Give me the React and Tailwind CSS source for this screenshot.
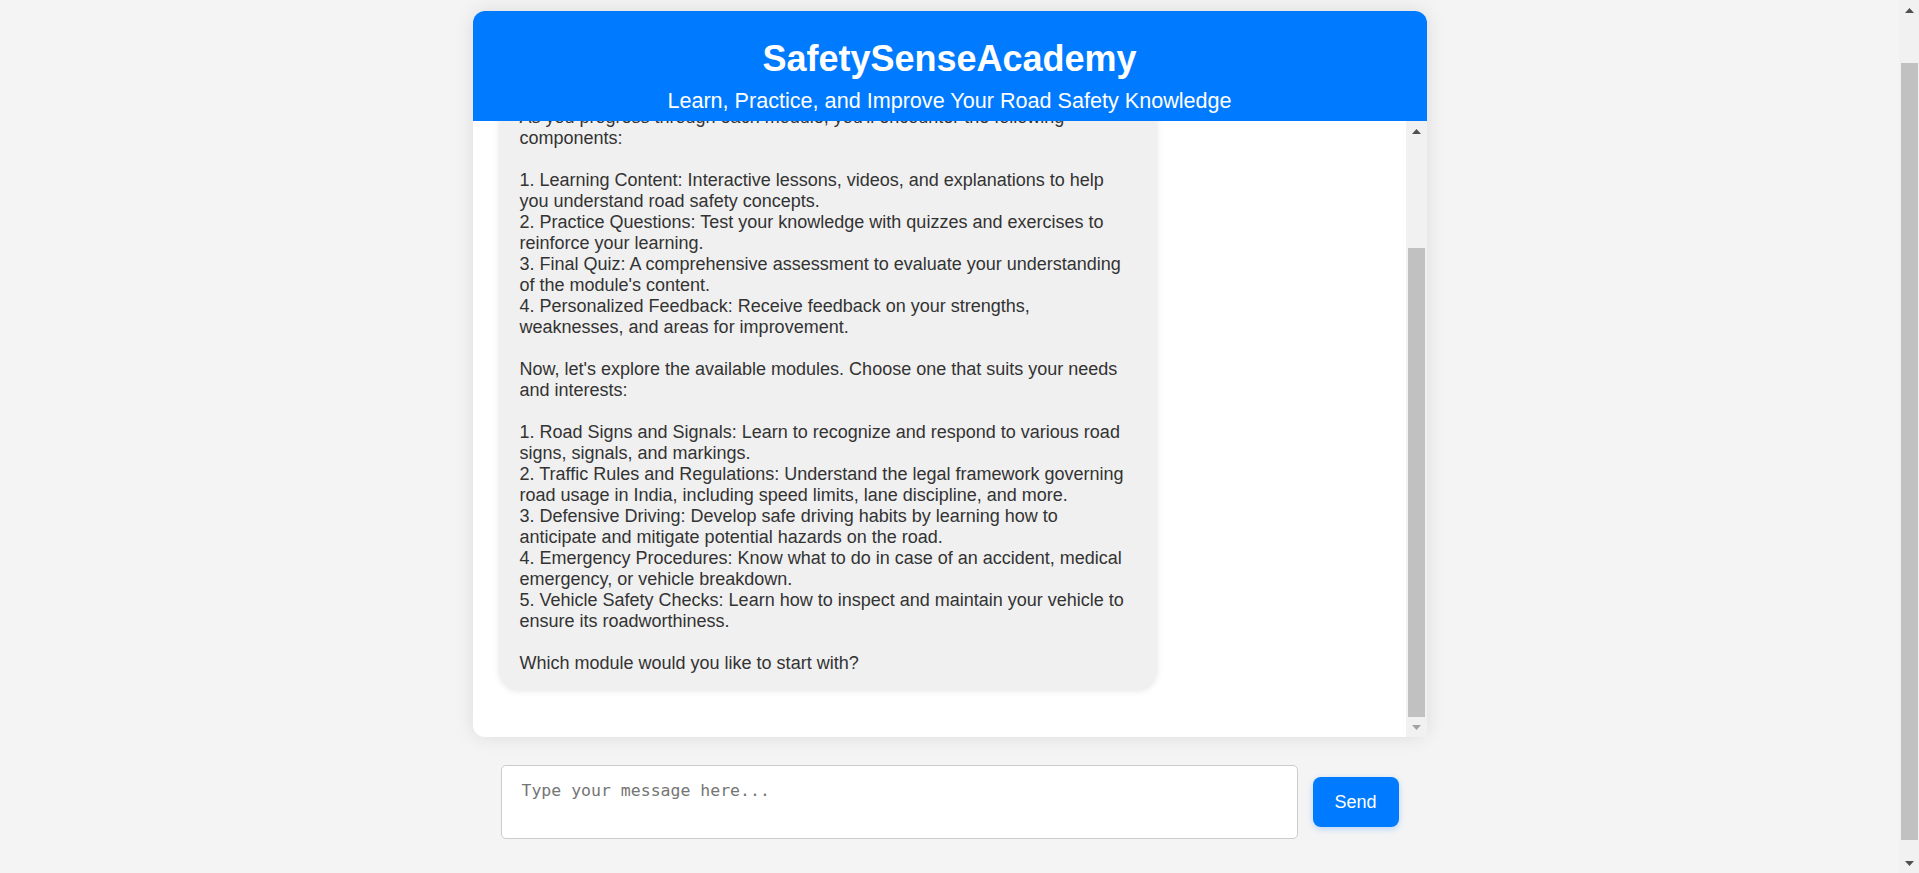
import React, { useLayoutEffect, useRef } from "react";

const intro =
  "Welcome to SafetySenseAcademy! I'm here to help you learn and improve your road safety knowledge through interactive modules tailored to Indian roads and traffic conditions. Each module is designed to build your confidence and skills as a responsible road user.\n\n";

const body = `As you progress through each module, you'll encounter the following components:

1. Learning Content: Interactive lessons, videos, and explanations to help you understand road safety concepts.
2. Practice Questions: Test your knowledge with quizzes and exercises to reinforce your learning.
3. Final Quiz: A comprehensive assessment to evaluate your understanding of the module's content.
4. Personalized Feedback: Receive feedback on your strengths, weaknesses, and areas for improvement.

Now, let's explore the available modules. Choose one that suits your needs and interests:

1. Road Signs and Signals: Learn to recognize and respond to various road signs, signals, and markings.
2. Traffic Rules and Regulations: Understand the legal framework governing road usage in India, including speed limits, lane discipline, and more.
3. Defensive Driving: Develop safe driving habits by learning how to anticipate and mitigate potential hazards on the road.
4. Emergency Procedures: Know what to do in case of an accident, medical emergency, or vehicle breakdown.
5. Vehicle Safety Checks: Learn how to inspect and maintain your vehicle to ensure its roadworthiness.

Which module would you like to start with?`;

function Arrow({ up, color }) {
  return (
    <svg width="9" height="5" viewBox="0 0 9 5" aria-hidden="true">
      <polygon points={up ? "4.5,0 9,5 0,5" : "0,0 9,0 4.5,5"} fill={color} />
    </svg>
  );
}

function PageScrollbar() {
  return (
    <div aria-hidden="true" className="w-[20px] h-full bg-[#f1f1f1] flex flex-col shrink-0">
      <div className="h-[20px] flex items-center justify-center pl-[1px]">
        <Arrow up color="#505050" />
      </div>
      <div className="flex-1 pt-[43px] pl-[2px] pr-[1px]">
        <div className="h-[777px] bg-[#c1c1c1]" />
      </div>
      <div className="h-[20px] flex items-center justify-center pl-[1px]">
        <Arrow color="#505050" />
      </div>
    </div>
  );
}

function ChatScrollbar() {
  return (
    <div aria-hidden="true" className="w-[21px] bg-[#f1f1f1] flex flex-col shrink-0">
      <div className="h-[20px] flex items-center justify-center pt-[1px]">
        <Arrow up color="#505050" />
      </div>
      <div className="flex-1 flex flex-col justify-end px-[2px]">
        <div className="h-[469px] bg-[#c1c1c1]" />
      </div>
      <div className="h-[20px] flex items-center justify-center">
        <Arrow color="#a3a3a3" />
      </div>
    </div>
  );
}

export default function App() {
  const chatRef = useRef(null);
  const pageRef = useRef(null);

  useLayoutEffect(() => {
    if (chatRef.current) {
      chatRef.current.scrollTop = chatRef.current.scrollHeight;
    }
    if (pageRef.current) {
      pageRef.current.scrollTop = 48;
    }
  }, []);

  return (
    <div className="h-screen flex bg-[#f4f4f4] font-['Liberation_Sans',Arial,sans-serif]">
      <div ref={pageRef} className="flex-1 overflow-hidden">
        <div className="pt-[59px] pb-[49px]">
          <div className="w-[954px] mx-auto bg-white rounded-[12px] shadow-[0_0_20px_rgba(0,0,0,0.1)]">
            <header className="bg-[#007bff] text-white text-center rounded-t-[12px] pt-[27px] pb-[8px]">
              <h1 className="text-[36px] font-bold leading-[41px]">SafetySenseAcademy</h1>
              <p className="text-[21.6px] leading-[25px] mt-[9px]">
                Learn, Practice, and Improve Your Road Safety Knowledge
              </p>
            </header>
            <div className="h-[616px] flex">
              <div ref={chatRef} className="flex-1 overflow-hidden">
                <div className="pl-[26px] pt-[20px] pb-[48px]">
                  <div className="w-[658px] bg-[#f0f0f0] rounded-[20px] px-[21px] py-[15px] shadow-[0_2px_6px_rgba(0,0,0,0.1)] text-[18px] leading-[21px] text-[#333333] whitespace-pre-wrap">
                    {intro}
                    {body}
                  </div>
                </div>
              </div>
              <ChatScrollbar />
            </div>
          </div>
          <div className="w-[954px] mx-auto flex items-center gap-[15px] px-[28px] mt-[28px]">
            <textarea
              placeholder="Type your message here..."
              className="flex-1 h-[74px] bg-white border border-[#cccccc] rounded-[5px] px-[20px] py-[15px] resize-none outline-none font-['DejaVu_Sans_Mono',monospace] text-[16.5px] leading-[20px] text-[#333333] placeholder:text-[#757575]"
            />
            <button className="w-[86px] h-[50px] bg-[#007bff] text-white text-[18px] rounded-[8px] shadow-[0_2px_6px_rgba(0,123,255,0.25)]">
              Send
            </button>
          </div>
        </div>
      </div>
      <PageScrollbar />
    </div>
  );
}
